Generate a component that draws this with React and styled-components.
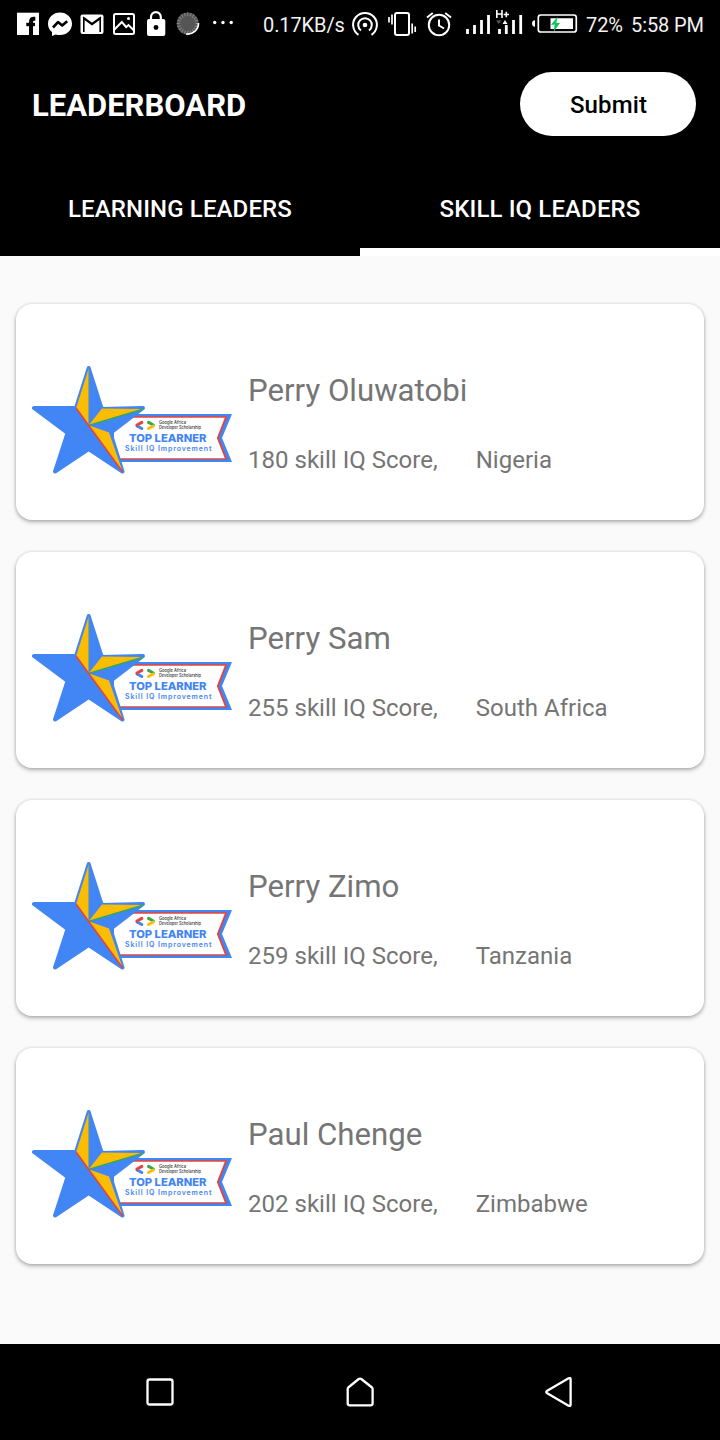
import React from 'react';
import styled, { createGlobalStyle } from 'styled-components';

const GlobalStyle = createGlobalStyle`
  * { box-sizing: border-box; }
  body { margin: 0; background: #fafafa; font-family: Roboto, "Liberation Sans", sans-serif; }
`;

const Screen = styled.div`
  width: 720px;
  height: 1440px;
  display: flex;
  flex-direction: column;
  background: #fafafa;
  overflow: hidden;
`;

const StatusBar = styled.div`
  height: 48px;
  flex: none;
  display: flex;
  justify-content: space-between;
  padding: 0 16px;
  background: #000;
`;

const StatusGroup = styled.div`
  display: flex;
  align-items: center;
  gap: ${(p) => p.$gap}px;
`;

const Glyph = styled.svg`
  display: block;
  flex: none;
`;

const StatusText = styled.span`
  width: ${(p) => p.$width}px;
  flex: none;
  padding-top: 2px;
  margin-left: ${(p) => p.$indent || 0}px;
  color: #f2f2f2;
  font-size: 20px;
  line-height: 26px;
  letter-spacing: -0.1px;
  white-space: nowrap;
`;

const Header = styled.header`
  height: 208px;
  flex: none;
  display: flex;
  flex-direction: column;
  background: #000;
  color: #fff;
`;

const TitleRow = styled.div`
  height: 112px;
  display: flex;
  align-items: center;
  justify-content: space-between;
  padding: 0 24px 0 32px;
`;

const Title = styled.h1`
  margin: 4px 0 0;
  font-size: 31px;
  line-height: 36px;
  font-weight: 700;
`;

const SubmitButton = styled.button`
  width: 176px;
  height: 64px;
  padding: 2px 0 0 1px;
  border: 0;
  border-radius: 32px;
  background: #fff;
  color: #000;
  font: 500 24px/28px Roboto, sans-serif;
  letter-spacing: 0.12px;
`;

const Tabs = styled.nav`
  height: 96px;
  display: flex;
`;

const Tab = styled.div`
  flex: 1;
  display: flex;
  align-items: center;
  justify-content: center;
  padding-top: ${(p) => (p.$active ? 10 : 2)}px;
  border-bottom: ${(p) => (p.$active ? '8px solid #fff' : '0')};
  font-size: 24px;
  font-weight: 500;
  letter-spacing: 0.12px;
`;

const List = styled.main`
  flex: 1;
  display: flex;
  flex-direction: column;
  gap: 32px;
  padding: 48px 16px 0;
`;

const Card = styled.article`
  height: 216px;
  flex: none;
  display: flex;
  align-items: flex-start;
  padding: 60px 16px 0;
  gap: 16px;
  border-radius: 16px;
  background: #fff;
  box-shadow: 0 2px 4px rgba(0, 0, 0, 0.3), 0 0 3px rgba(0, 0, 0, 0.12);
`;

const Details = styled.div`
  display: flex;
  flex-direction: column;
  gap: 36px;
  padding-top: 8px;
  color: #757575;
`;

const Name = styled.div`
  font-size: 31.2px;
  line-height: 38px;
`;

const Stats = styled.div`
  display: flex;
  gap: 38px;
  font-size: 24px;
  line-height: 28px;
  letter-spacing: 0.02px;
  white-space: nowrap;
`;

const NavBar = styled.footer`
  height: 96px;
  flex: none;
  display: flex;
  align-items: center;
  justify-content: space-between;
  padding: 0 140px;
  background: #000;
`;

// Each status glyph is drawn on the bar's own 720x48 grid; x picks its column.
const BarIcon = ({ x, w, children }) => (
  <Glyph width={w} height="48" viewBox={`${x} 0 ${w} 48`} fill="none" stroke="none">
    {children}
  </Glyph>
);

const ticks = Array.from({ length: 20 }, (_, i) => i * 18);

const LeftIcons = () => (
  <StatusGroup $gap={8}>
    <BarIcon x={16} w={24}>
      <rect x="17" y="12.700" width="22" height="22.300" fill="#fff" />
      <path stroke="#000" strokeWidth="4" d="M31 35.500V22q0-3.300 3-3.300h1.300" />
      <path stroke="#000" strokeWidth="3.400" d="M26.300 24.500h8.700" />
    </BarIcon>
    <BarIcon x={48} w={24}>
      <path fill="#fff" d="M60 12.500c-6.800 0-12 4.900-12 11.300 0 3.500 1.500 6.300 4 8.300v4l3.800-1.600c1.300.4 2.700.6 4.200.6 6.800 0 12-4.900 12-11.300s-5.200-11.300-12-11.300z" />
      <path stroke="#000" strokeWidth="2.600" strokeLinejoin="round" d="M53 27.500l5-5.400 4.200 3.400 5-4.200" />
    </BarIcon>
    <BarIcon x={80} w={24}>
      <rect x="80.500" y="14.500" width="23" height="19.500" rx="2" fill="#fff" />
      <path stroke="#000" strokeWidth="1.600" d="M83.800 32v-13.500l8.200 6 8.200-6v13.500" />
      <path stroke="#000" strokeWidth="1.500" d="M83 17l9 6.500 9-6.500" />
    </BarIcon>
    <BarIcon x={112} w={24}>
      <rect x="114" y="14" width="20" height="20" rx="1.500" stroke="#fff" strokeWidth="2" />
      <path stroke="#fff" strokeWidth="2" d="M114.500 29.500l7.300-7.500 4.400 5 2.300-2 5.500 5.500" />
      <circle cx="128.500" cy="18.500" r="1.500" fill="#fff" />
    </BarIcon>
    <BarIcon x={144} w={24}>
      <rect x="147" y="19" width="18.300" height="17" rx="2" fill="#fff" />
      <path stroke="#fff" strokeWidth="2.200" d="M151 20v-3a4.900 4.900 0 0 1 9.800 0v3" />
      <circle cx="156" cy="27.500" r="2.400" fill="#000" />
    </BarIcon>
    <BarIcon x={176} w={24}>
      <circle cx="187.700" cy="23.500" r="11" fill="#555" />
      {ticks.map((a) => (
        <path key={a} stroke="#888" strokeWidth="1" d="M187.700 12.500v3.500" transform={`rotate(${a} 187.700 23.500)`} />
      ))}
      <path stroke="#fff" strokeWidth="1.600" d="M198.500 23a10.900 10.900 0 0 1-12.500 11" />
    </BarIcon>
    <BarIcon x={208} w={28}>
      <circle cx="214.700" cy="22.500" r="1.700" fill="#fff" />
      <circle cx="223" cy="22.500" r="1.700" fill="#fff" />
      <circle cx="231.200" cy="22.500" r="1.700" fill="#fff" />
    </BarIcon>
  </StatusGroup>
);

const RightIcons = () => (
  <StatusGroup $gap={0}>
    <StatusText $width={87}>0.17KB/s</StatusText>
    <BarIcon x={350} w={36}>
      <circle cx="365" cy="25" r="2.300" fill="#fff" />
      <path stroke="#fff" strokeWidth="2" d="M361 30.500a6.800 6.800 0 1 1 8 0" />
      <path stroke="#fff" strokeWidth="2" d="M358.500 34.800a11.900 11.900 0 1 1 13 0" />
    </BarIcon>
    <BarIcon x={386} w={36}>
      <rect x="395" y="13" width="14" height="22" rx="2" stroke="#fff" strokeWidth="2" />
      <path stroke="#fff" strokeWidth="1.700" d="M389 17v5.500M392 14.500v10M412.200 23.500v10M415.200 26.500v5.500" />
    </BarIcon>
    <BarIcon x={422} w={38}>
      <circle cx="439" cy="25" r="10.200" stroke="#fff" strokeWidth="2" />
      <path stroke="#fff" strokeWidth="2" d="M439 19.500v6l5 3M427 17.500l5.800-4.500M451 17.500l-5.800-4.500" />
    </BarIcon>
    <BarIcon x={460} w={70}>
      <path stroke="#fff" strokeWidth="2.800" d="M467.500 29v5M474.500 25v9M481.500 20v14M488.500 15v19M499.500 29v5M506.300 25v9M513.500 20v14M520.700 15v19" />
      <path stroke="#fff" strokeWidth="1.600" d="M496.800 10v8M502 10v8M496.800 14h5.200M503.700 14.500h5.300M506.300 11.800v5.400" />
      <path fill="#555" d="M496 20.500h5.500l-2.700 3.500z" />
      <path fill="#fff" d="M502.500 24h5l-2.500-4z" />
    </BarIcon>
    <BarIcon x={530} w={50}>
      <rect x="538.300" y="15" width="38" height="17" rx="2.500" stroke="#fff" strokeWidth="1.700" />
      <path fill="#fff" d="M535 20.300v6.500c-1.500 0-3-1-3-3.200s1.500-3.300 3-3.300zM550.500 18.300h22.500v10.800h-22.500z" />
      <path fill="#10c45c" d="M557.500 16.800l-6.500 8h3.700l-1.200 7.200 6.500-9h-3.700z" />
    </BarIcon>
    <StatusText $width={37} $indent={6}>72%</StatusText>
    <StatusText $width={73} $indent={8}>5:58 PM</StatusText>
  </StatusGroup>
);

const STAR = '88.700,368 101.800,409 143,408 110.500,433 122.500,471.500 88.700,449 55,471.500 67.500,433 34,408 76,408';

const LearnerBadge = () => (
  <Glyph width="200" height="112" viewBox="32 364 200 112">
    <path fill="#4285f4" d="M112 414H232L222 438L232 462H112Z" />
    <path fill="#ea4335" d="M114 416.300H227L217.500 438L227 459.600H114Z" />
    <path fill="#fff" d="M114 417.700H225.600L219 434L217.800 438L225.600 458.300H114Z" />
    <path stroke="#ea4335" strokeWidth="1.800" fill="none" d="M226 417L217.800 438L226 459" />
    <polygon points={STAR} fill="#4285f4" stroke="#4285f4" strokeWidth="4" strokeLinejoin="round" />
    <path fill="#fbbc04" d="M88.700 368.500V425.300L76.300 407.500zM88.700 425.300L102 408.500L143.500 409zM88.700 425.300L109 432.500L122.500 471z" />
    <path stroke="#34a853" strokeWidth="1.400" d="M88.700 425.300L143.500 409" />
    <path stroke="#7f9f6b" strokeWidth=".7" d="M88.700 369v56" />
    <path stroke="#ea4335" strokeWidth="1.500" d="M76 408L122.700 472" />
    <g fill="none" strokeWidth="3" strokeLinecap="round">
      <path stroke="#4285f4" d="M137 426l4.800 2.500" />
      <path stroke="#ea4335" d="M137 425l4.800-2.600" />
      <path stroke="#34a853" d="M148.500 422.400l4.800 2.600" />
      <path stroke="#fbbc04" d="M148.500 428.500l4.800-2.500" />
    </g>
    <g fontFamily="Inter, sans-serif">
      <g fill="#333" fontSize="4.300" fontWeight="500">
        <text x="159" y="424.200" textLength="27" lengthAdjust="spacingAndGlyphs">Google Africa</text>
        <text x="159" y="429.200" textLength="42" lengthAdjust="spacingAndGlyphs">Developer Scholarship</text>
      </g>
      <g fill="#4285f4">
        <text x="129" y="442.300" fontSize="10.800" fontWeight="800" textLength="77.500" lengthAdjust="spacingAndGlyphs">TOP LEARNER</text>
        <text x="125" y="450.600" fontSize="7" fontWeight="600" textLength="86.500">Skill IQ Improvement</text>
      </g>
    </g>
  </Glyph>
);

const leaders = [
  { name: 'Perry Oluwatobi', score: 180, country: 'Nigeria' },
  { name: 'Perry Sam', score: 255, country: 'South Africa' },
  { name: 'Perry Zimo', score: 259, country: 'Tanzania' },
  { name: 'Paul Chenge', score: 202, country: 'Zimbabwe' },
];

const LeaderCard = ({ leader }) => (
  <Card>
    <LearnerBadge />
    <Details>
      <Name>{leader.name}</Name>
      <Stats>
        <span>{leader.score} skill IQ Score,</span>
        <span>{leader.country}</span>
      </Stats>
    </Details>
  </Card>
);

const NavIcon = ({ d }) => (
  <Glyph width="40" height="40" viewBox="0 0 40 40" fill="none" stroke="#fff" strokeWidth="2.300" strokeLinejoin="round">
    <path d={d} />
  </Glyph>
);

export default function App() {
  return (
    <Screen>
      <GlobalStyle />
      <StatusBar>
        <LeftIcons />
        <RightIcons />
      </StatusBar>
      <Header>
        <TitleRow>
          <Title>LEADERBOARD</Title>
          <SubmitButton>Submit</SubmitButton>
        </TitleRow>
        <Tabs>
          <Tab>LEARNING LEADERS</Tab>
          <Tab $active>SKILL IQ LEADERS</Tab>
        </Tabs>
      </Header>
      <List>
        {leaders.map((leader) => (
          <LeaderCard key={leader.name} leader={leader} />
        ))}
      </List>
      <NavBar>
        <NavIcon d="M9.500 7.500h21a2 2 0 0 1 2 2v21a2 2 0 0 1-2 2h-21a2 2 0 0 1-2-2v-21a2 2 0 0 1 2-2z" />
        <NavIcon d="M18.700 7q1.300-.9 2.600 0L32 15.500q.6.600.6 1.500v14.300a2 2 0 0 1-2 2H9.700a2 2 0 0 1-2-2V17q0-.9.600-1.500z" />
        <NavIcon d="M7.200 18.800L28.600 6.300q1.900-.8 2 1v25.400q-.1 1.800-2 1L7.200 21.200q-2-1.200 0-2.400z" />
      </NavBar>
    </Screen>
  );
}
